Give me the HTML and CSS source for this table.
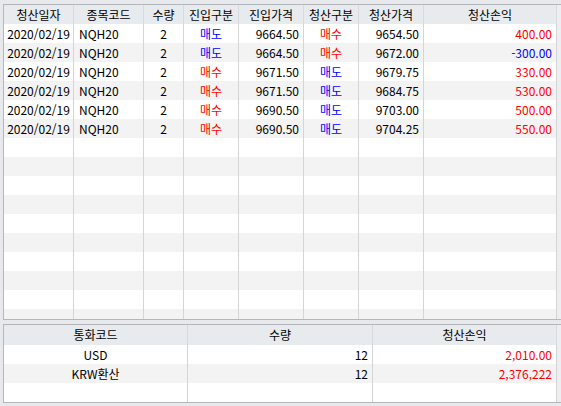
FILE: index.html
```html
<!DOCTYPE html>
<html lang="ko">
<head>
<meta charset="utf-8">
<link rel="stylesheet" href="styles.css">
</head>
<body>
<div class="wrap">
  <div class="grid top">
    <div class="row head">
      <div class="c">청산일자</div><div class="c">종목코드</div><div class="c">수량</div><div class="c">진입구분</div><div class="c">진입가격</div><div class="c">청산구분</div><div class="c">청산가격</div><div class="c">청산손익</div>
    </div>
    <div class="body">
      <div class="row"><div class="c">2020/02/19</div><div class="c l">NQH20</div><div class="c">2</div><div class="c blue">매도</div><div class="c r">9664.50</div><div class="c red">매수</div><div class="c r">9654.50</div><div class="c r red">400.00</div></div>
      <div class="row"><div class="c">2020/02/19</div><div class="c l">NQH20</div><div class="c">2</div><div class="c blue">매도</div><div class="c r">9664.50</div><div class="c red">매수</div><div class="c r">9672.00</div><div class="c r blue">-300.00</div></div>
      <div class="row"><div class="c">2020/02/19</div><div class="c l">NQH20</div><div class="c">2</div><div class="c red">매수</div><div class="c r">9671.50</div><div class="c blue">매도</div><div class="c r">9679.75</div><div class="c r red">330.00</div></div>
      <div class="row"><div class="c">2020/02/19</div><div class="c l">NQH20</div><div class="c">2</div><div class="c red">매수</div><div class="c r">9671.50</div><div class="c blue">매도</div><div class="c r">9684.75</div><div class="c r red">530.00</div></div>
      <div class="row"><div class="c">2020/02/19</div><div class="c l">NQH20</div><div class="c">2</div><div class="c red">매수</div><div class="c r">9690.50</div><div class="c blue">매도</div><div class="c r">9703.00</div><div class="c r red">500.00</div></div>
      <div class="row"><div class="c">2020/02/19</div><div class="c l">NQH20</div><div class="c">2</div><div class="c red">매수</div><div class="c r">9690.50</div><div class="c blue">매도</div><div class="c r">9704.25</div><div class="c r red">550.00</div></div>
      <div class="row"><div class="c"></div><div class="c"></div><div class="c"></div><div class="c"></div><div class="c"></div><div class="c"></div><div class="c"></div><div class="c"></div></div>
      <div class="row"><div class="c"></div><div class="c"></div><div class="c"></div><div class="c"></div><div class="c"></div><div class="c"></div><div class="c"></div><div class="c"></div></div>
      <div class="row"><div class="c"></div><div class="c"></div><div class="c"></div><div class="c"></div><div class="c"></div><div class="c"></div><div class="c"></div><div class="c"></div></div>
      <div class="row"><div class="c"></div><div class="c"></div><div class="c"></div><div class="c"></div><div class="c"></div><div class="c"></div><div class="c"></div><div class="c"></div></div>
      <div class="row"><div class="c"></div><div class="c"></div><div class="c"></div><div class="c"></div><div class="c"></div><div class="c"></div><div class="c"></div><div class="c"></div></div>
      <div class="row"><div class="c"></div><div class="c"></div><div class="c"></div><div class="c"></div><div class="c"></div><div class="c"></div><div class="c"></div><div class="c"></div></div>
      <div class="row"><div class="c"></div><div class="c"></div><div class="c"></div><div class="c"></div><div class="c"></div><div class="c"></div><div class="c"></div><div class="c"></div></div>
      <div class="row"><div class="c"></div><div class="c"></div><div class="c"></div><div class="c"></div><div class="c"></div><div class="c"></div><div class="c"></div><div class="c"></div></div>
      <div class="row"><div class="c"></div><div class="c"></div><div class="c"></div><div class="c"></div><div class="c"></div><div class="c"></div><div class="c"></div><div class="c"></div></div>
      <div class="row"><div class="c"></div><div class="c"></div><div class="c"></div><div class="c"></div><div class="c"></div><div class="c"></div><div class="c"></div><div class="c"></div></div>
    </div>
  </div>
  <div class="grid bottom">
    <div class="row head">
      <div class="c">통화코드</div><div class="c">수량</div><div class="c">청산손익</div>
    </div>
    <div class="row"><div class="c">USD</div><div class="c r">12</div><div class="c r red">2,010.00</div></div>
    <div class="row"><div class="c">KRW환산</div><div class="c r">12</div><div class="c r red">2,376,222</div></div>
    <div class="row"><div class="c"></div><div class="c"></div><div class="c"></div></div>
  </div>
</div>
</body>
</html>
```

FILE: styles.css
```css
* { box-sizing: border-box; }
html, body {
  margin: 0;
  padding: 0;
  background: #e7e9ec;
}
body {
  font-family: "Noto Sans CJK KR", "Noto Sans", sans-serif;
  font-size: 12px;
  color: #000;
  width: 561px;
  height: 406px;
  overflow: hidden;
}
.wrap {
  padding: 4px 0 0 3px;
  display: flex;
  flex-direction: column;
  gap: 4px;
}
.grid {
  border-top: 1px solid #b3b7bc;
  border-left: 1px solid #b3b7bc;
  border-bottom: 1px solid #b3b7bc;
  background: #eceef1;
}
.top { height: 316px; display: flex; flex-direction: column; }
.top .body { flex: 1; overflow: hidden; }
.row {
  display: grid;
  height: 19px;
  line-height: 19px;
  white-space: nowrap;
}
.top .row { grid-template-columns: 70px 70px 40px 55px 65px 55px 65px 133px; }
.bottom .row { grid-template-columns: 184px 185px 184px; }
.bottom .head { height: 20px; line-height: 20px; }
.c {
  border-right: 1px solid #d5d5d5;
  text-align: center;
  overflow: hidden;
  background: #fff;
}
.body .row:nth-child(even) .c,
.bottom .row:nth-child(3) .c { background: #f3f3f3; }
.head .c {
  background: #e8ebee;
  border-right-color: #d6d9dd;
}
.c.l { text-align: left; padding-left: 5px; }
.c.r { text-align: right; padding-right: 4px; }
.red { color: #ff0000; }
.blue { color: #0000ff; }
```
